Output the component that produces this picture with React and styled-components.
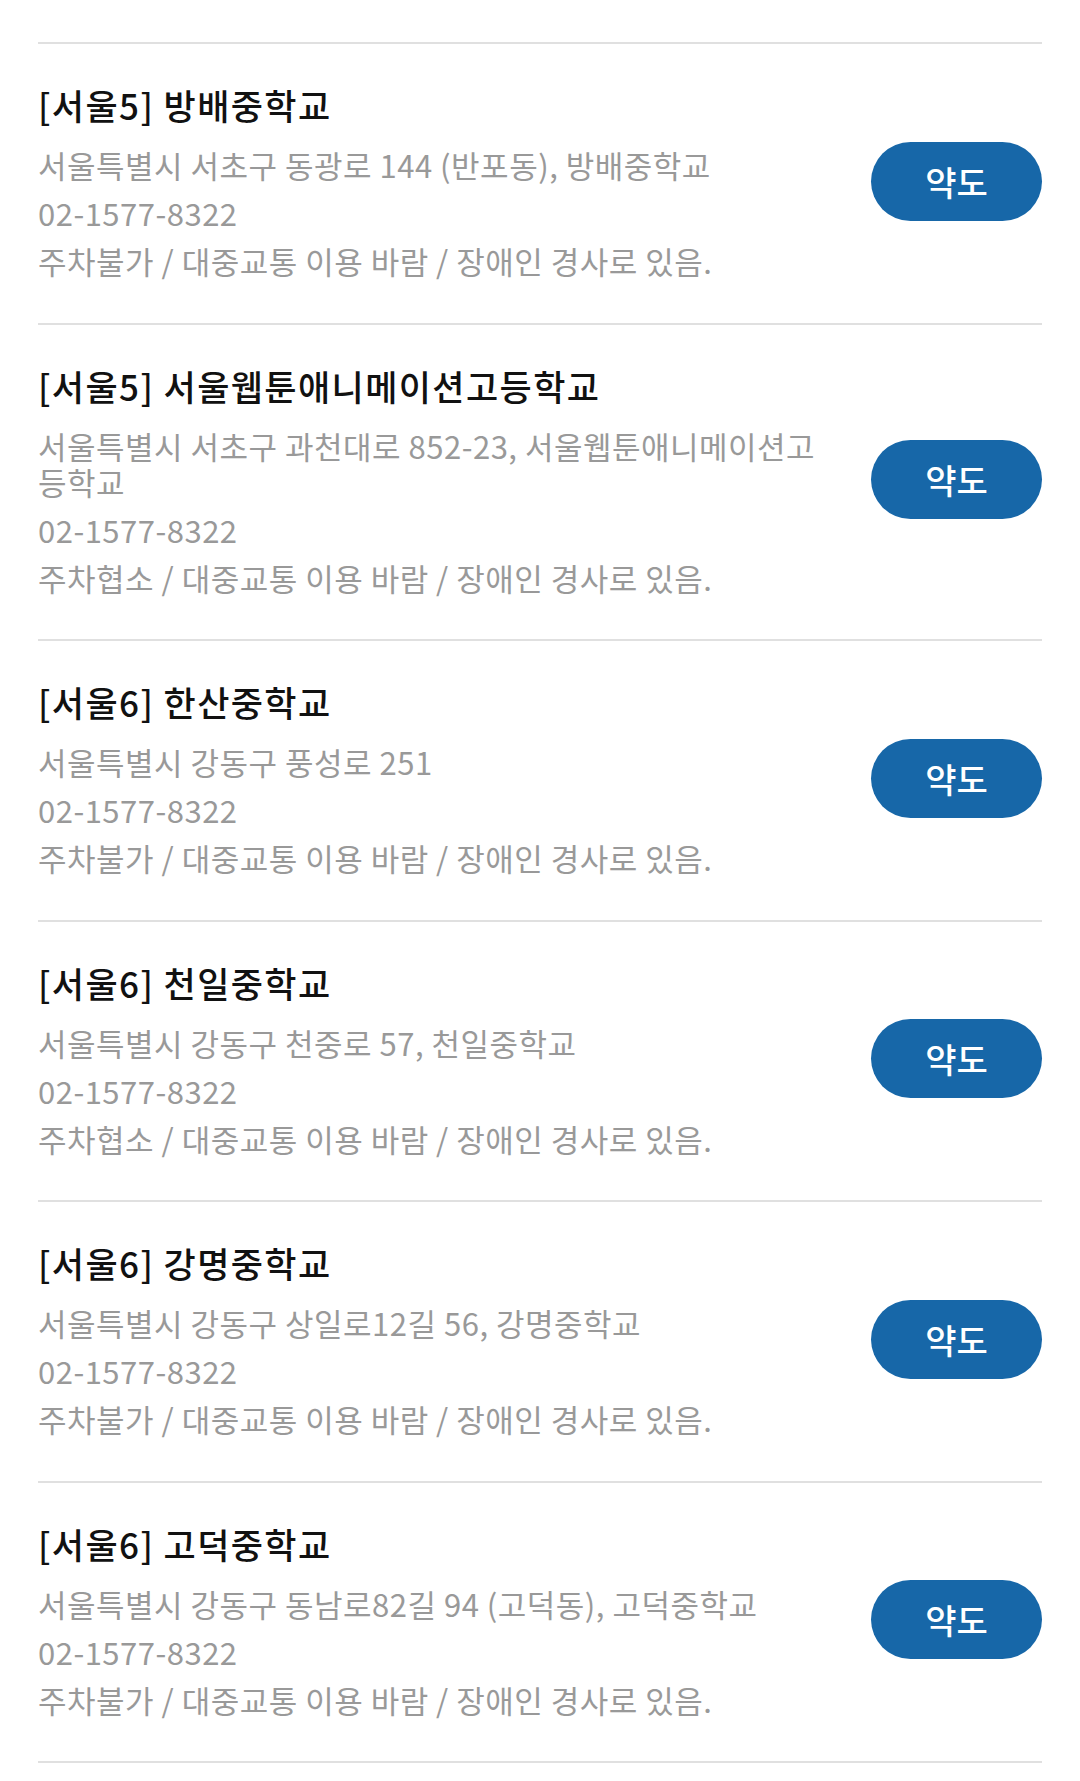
import React from 'react';
import styled, { createGlobalStyle } from 'styled-components';

const GlobalStyle = createGlobalStyle`
    body {
        margin: 0;
        background: #fff;
        font-family: 'Noto Sans CJK KR', 'Noto Sans', sans-serif;
    }
`;

const List = styled.ul`
    list-style: none;
    margin: 0;
    padding: 42px 38px 0;
`;

const Item = styled.li`
    display: flex;
    align-items: center;
    justify-content: space-between;
    gap: 40px;
    border-top: 2px solid #e0e0e0;
    padding: 39px 0 43.5px;

    &:last-child {
        border-bottom: 2px solid #e0e0e0;
    }
`;

const Info = styled.div`
    flex: 1;
    min-width: 0;
`;

const Title = styled.h3`
    margin: 0 0 20px;
    font-size: 35px;
    line-height: 44px;
    font-weight: 500;
    color: #111;
    letter-spacing: 1.4px;
`;

const Line = styled.p`
    margin: 0;
    font-size: 31px;
    line-height: 36px;
    color: #999;
    letter-spacing: 0.5px;

    & + & {
        margin-top: 12px;
    }
`;

const MapButton = styled.button`
    flex: none;
    width: 171px;
    height: 79px;
    border: 0;
    border-radius: 40px;
    background: #1767a8;
    color: #fff;
    font-family: inherit;
    font-size: 34px;
    font-weight: 500;
    cursor: pointer;
`;

const schools = [
    {
        name: '[서울5] 방배중학교',
        address: '서울특별시 서초구 동광로 144 (반포동), 방배중학교',
        parking: '주차불가',
    },
    {
        name: '[서울5] 서울웹툰애니메이션고등학교',
        address: '서울특별시 서초구 과천대로 852-23, 서울웹툰애니메이션고등학교',
        parking: '주차협소',
    },
    {
        name: '[서울6] 한산중학교',
        address: '서울특별시 강동구 풍성로 251',
        parking: '주차불가',
    },
    {
        name: '[서울6] 천일중학교',
        address: '서울특별시 강동구 천중로 57, 천일중학교',
        parking: '주차협소',
    },
    {
        name: '[서울6] 강명중학교',
        address: '서울특별시 강동구 상일로12길 56, 강명중학교',
        parking: '주차불가',
    },
    {
        name: '[서울6] 고덕중학교',
        address: '서울특별시 강동구 동남로82길 94 (고덕동), 고덕중학교',
        parking: '주차불가',
    },
];

const App = () => (
    <>
        <GlobalStyle />
        <List>
            {schools.map(school => (
                <Item key={school.name}>
                    <Info>
                        <Title>{school.name}</Title>
                        <Line>{school.address}</Line>
                        <Line>02-1577-8322</Line>
                        <Line>{school.parking} / 대중교통 이용 바람 / 장애인 경사로 있음.</Line>
                    </Info>
                    <MapButton type="button">약도</MapButton>
                </Item>
            ))}
        </List>
    </>
);

export default App;
